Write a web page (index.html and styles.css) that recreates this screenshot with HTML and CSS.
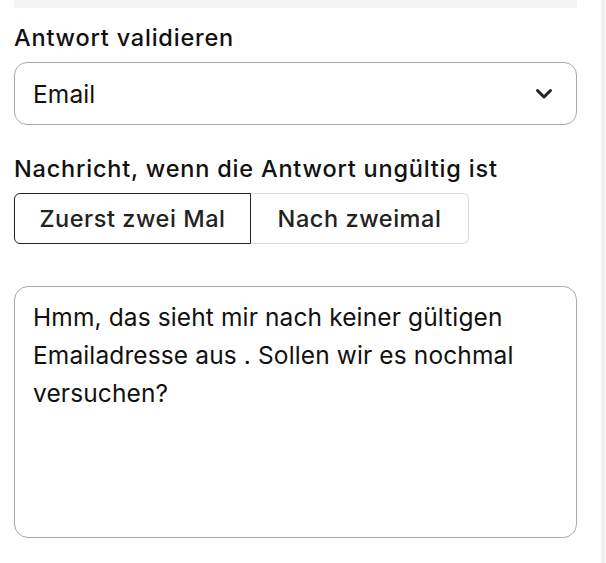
FILE: index.html
```html
<!DOCTYPE html>
<html lang="de">
<head>
<meta charset="utf-8">
<link rel="stylesheet" href="styles.css">
</head>
<body>
<div class="page">
  <main class="panel">
    <div class="topbar"></div>
    <label class="label label-first">Antwort validieren</label>
    <div class="select">
      <span class="select-value">Email</span>
      <svg class="chevron" width="18" height="12" viewBox="0 0 18 12"><path d="M2.5 2.5 L9 9 L15.5 2.5" fill="none" stroke="#222" stroke-width="3" stroke-linecap="round" stroke-linejoin="round"/></svg>
    </div>
    <label class="label label-second">Nachricht, wenn die Antwort ungültig ist</label>
    <div class="toggle">
      <div class="toggle-btn active">Zuerst zwei Mal</div>
      <div class="toggle-btn">Nach zweimal</div>
    </div>
    <div class="textarea">Hmm, das sieht mir nach keiner gültigen Emailadresse aus . Sollen wir es nochmal versuchen?</div>
  </main>
  <div class="scrollbar"></div>
</div>
</body>
</html>
```
FILE: styles.css
```css
* { box-sizing: border-box; }
html, body { margin: 0; padding: 0; background: #fff; }
body {
  font-family: Inter, "Noto Sans", sans-serif;
  color: #111;
  width: 606px;
  height: 563px;
  overflow: hidden;
}
.page {
  display: flex;
  height: 563px;
}
.panel {
  width: 601px;
  padding: 0 24px 0 14px;
  display: flex;
  flex-direction: column;
}
.scrollbar {
  width: 4px;
  background: #eef0f4;
}
.topbar {
  height: 8px;
  background: #f3f4f6;
}
.label {
  font-size: 23.5px;
  font-weight: 500;
  line-height: 30px;
  letter-spacing: 0.8px;
}
.label-first { margin-top: 14.5px; }
.label-second { margin-top: 28.5px; }
.select {
  margin-top: 9.5px;
  height: 63px;
  border: 1px solid #a9a9a9;
  border-radius: 13px;
  display: flex;
  align-items: center;
  justify-content: space-between;
  padding: 0 23px 0 18px;
}
.select-value {
  font-size: 24.5px;
  letter-spacing: 0.12px;
}
.chevron { display: block; }
.toggle {
  margin-top: 9.5px;
  display: flex;
  height: 51px;
}
.toggle-btn {
  display: flex;
  align-items: center;
  justify-content: center;
  font-size: 23.5px;
  font-weight: 500;
  letter-spacing: 0.55px;
  color: #222;
  border: 1px solid #dcdcdc;
}
.toggle-btn.active {
  width: 237px;
  border: 1px solid #222;
  border-radius: 6px 0 0 6px;
}
.toggle-btn:not(.active) {
  width: 218px;
  border-left: none;
  border-radius: 0 6px 6px 0;
}
.textarea {
  margin-top: 42px;
  height: 252px;
  border: 1px solid #a9a9a9;
  border-radius: 14px;
  padding: 11px 40px 0 18px;
  font-size: 24.5px;
  line-height: 38px;
  letter-spacing: 0.12px;
}
```
